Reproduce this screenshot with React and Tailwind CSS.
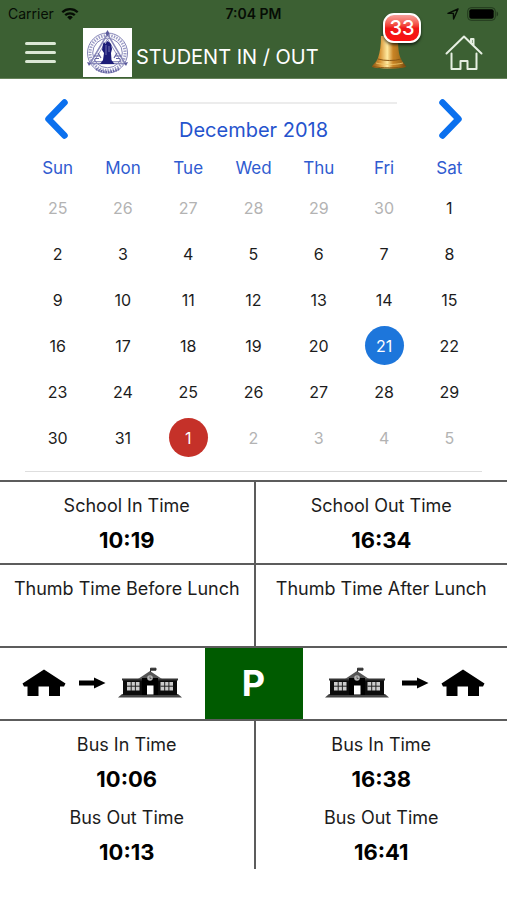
import React from "react";

const WEEKDAYS = ["Sun", "Mon", "Tue", "Wed", "Thu", "Fri", "Sat"];

const WEEKS = [
  [25, 26, 27, 28, 29, 30, 1],
  [2, 3, 4, 5, 6, 7, 8],
  [9, 10, 11, 12, 13, 14, 15],
  [16, 17, 18, 19, 20, 21, 22],
  [23, 24, 25, 26, 27, 28, 29],
  [30, 31, 1, 2, 3, 4, 5],
];

function WifiIcon() {
  return (
    <svg viewBox="0 0 18 14" className="h-[14px] w-[18px]" fill="none" stroke="#060d05" strokeWidth="2.3" aria-hidden="true">
      <path d="M1.3 5.2a11 11 0 0 1 15.4 0" />
      <path d="M4.2 8.2a7 7 0 0 1 9.6 0" />
      <path d="M9 13 6.2 10.2a4 4 0 0 1 5.6 0Z" fill="#060d05" stroke="none" />
    </svg>
  );
}

function StatusBar() {
  return (
    <div className="grid h-[27px] grid-cols-3 items-center px-2 text-[13px] leading-[18px] text-[#060d05]">
      <div className="flex items-center gap-[7px]">
        <span className="text-[14px]">Carrier</span>
        <WifiIcon />
      </div>
      <div className="text-center text-[14px] font-semibold">7:04 PM</div>
      <div className="flex items-center justify-end gap-[8px]">
        <svg viewBox="0 0 12 12" className="h-[12px] w-[12px]" fill="none" stroke="#060d05" strokeWidth="1.4" strokeLinejoin="round" aria-hidden="true">
          <path d="M11 1 1 5.400h5.400L6.600 11Z" />
        </svg>
        <svg viewBox="0 0 32 14" className="h-[14px] w-[32px]" aria-hidden="true">
          <rect x="0.7" y="0.7" width="27.6" height="12.6" rx="3.4" fill="none" stroke="#22391d" strokeWidth="1" />
          <rect x="2.3" y="2.3" width="24.4" height="9.4" rx="2" fill="#000" />
          <path d="M29.6 4.6c2 .6 2 4.2 0 4.8Z" fill="#22391d" />
        </svg>
      </div>
    </div>
  );
}

function Crest() {
  return (
    <svg viewBox="0 0 49 49" className="h-[49px] w-[49px] bg-white" role="img" aria-label="School crest">
      <g fill="none" stroke="#6464a3">
        <circle cx="24.5" cy="25" r="20" strokeWidth="0.8" />
        <circle cx="24.5" cy="25" r="17.5" strokeWidth="3" strokeDasharray="1.4 1.2" stroke="#9c9cc6" />
        <circle cx="24.5" cy="25" r="14.8" strokeWidth="0.8" />
        <path d="M24.5 6 7 35.5h35Z" strokeWidth="1.5" stroke="#8a8aba" />
        <path d="M24.5 11 11 33.5h27Z" strokeWidth="0.7" />
        <path d="M13 41q11.500 6 23 0" strokeWidth="2.500" strokeDasharray="1.500 1" />
        <path d="M11 28h6m-5 2.500h4M32 28h6m-5 2.500h4M15 25l3 5M34 25l-3 5" strokeWidth="1.200" />
      </g>
      <path d="m24.500 2 2 3.500-2 2.500-2-2.500ZM4 34l4 1-2 3ZM45 34l-4 1 2 3Z" fill="#5a5a9c" />
      <path d="M20 16l1-2 1.500 2 1.500-3 2 1 2 2 1 5-1 4 .5 7 3 4H17l3-4 1-7-2-3Z" fill="#1d1d78" />
      <path d="M23 17v10M26 18v6" stroke="#9a9ac8" strokeWidth="0.7" />
    </svg>
  );
}

function Bell() {
  return (
    <svg viewBox="0 0 36 38" className="h-[38px] w-[36px]" aria-hidden="true">
      <defs>
        <linearGradient id="brass" x1="0" x2="1">
          <stop offset="0" stopColor="#8a5512" />
          <stop offset="0.25" stopColor="#d9983a" />
          <stop offset="0.45" stopColor="#ffeaa0" />
          <stop offset="0.62" stopColor="#c98425" />
          <stop offset="0.82" stopColor="#a8701c" />
          <stop offset="1" stopColor="#70420d" />
        </linearGradient>
      </defs>
      <path d="M10 2h17c0 11 .5 18 3 23 2 4 5 6 5 8-8 2-27 2-34 0 0-2 4-4 6-9C9 18 10 11 10 2Z" fill="url(#brass)" />
      <path d="M7 25c6 2 17 2 23 0M1.500 32.500c9 1.800 25 1.800 33 0" fill="none" stroke="#8a5714" strokeWidth="1" />
      <path d="M5 29c7 2 19 2 27 0" fill="none" stroke="#f2cb70" strokeWidth="0.8" />
    </svg>
  );
}

function Header() {
  return (
    <header className="border-b border-[#66835a] bg-[#3c6033]">
      <StatusBar />
      <div className="flex h-[51px] items-center pr-6 pl-[25px]">
        <button type="button" aria-label="Menu" className="flex w-[31px] flex-col gap-[6px]">
          <span className="h-[3px] rounded-full bg-[#dbe8d5]" />
          <span className="h-[3px] rounded-full bg-[#dbe8d5]" />
          <span className="h-[3px] rounded-full bg-[#dbe8d5]" />
        </button>
        <div className="ml-[27px]">
          <Crest />
        </div>
        <h1 className="ml-1 flex-1 pt-[8px] text-[20px] leading-[26px] whitespace-nowrap text-white">STUDENT IN / OUT</h1>
        <button type="button" aria-label="Notifications, 33 unread" className="relative mr-[38px] h-[38px] w-[36px]">
          <Bell />
          <span className="absolute -top-[21px] left-[12px] flex h-[30px] w-[38px] items-center justify-center rounded-[11px] border-2 border-white bg-linear-to-b from-[#f8a09c] via-[#ef1717] to-[#fa1212] text-[20px] leading-none font-medium text-white shadow-[0_2px_3px_#000000aa]">
            33
          </span>
        </button>
        <button type="button" aria-label="Home">
          <svg viewBox="0 0 38 36" className="h-[36px] w-[38px]" fill="none" stroke="#e6efe2" strokeWidth="2" strokeLinecap="round" strokeLinejoin="round" aria-hidden="true">
            <path d="M1.500 18.500 19 1.500l17.500 17M26 8V4h2.500v6.500M6.500 18.500v15.500h9v-8h7v8h9v-15.500" />
          </svg>
        </button>
      </div>
    </header>
  );
}

function dayClass(week, day) {
  if (week === 3 && day === 21) return "bg-[#1d76db] text-white";
  if (week === 5 && day === 1) return "bg-[#c53129] text-white";
  if ((week === 0 && day > 7) || (week === 5 && day < 7)) return "text-[#b3b3b3]";
  return "text-[#1c1c1c]";
}

function Calendar() {
  return (
    <section aria-label="Calendar" className="px-[25px] pb-[8px]">
      <div className="flex h-[75px] justify-between px-[19px] pt-[20px]">
        <button type="button" aria-label="Previous month" className="h-[40px] w-[24px]">
          <svg viewBox="0 0 24 40" className="h-[40px] w-[24px]" fill="none" stroke="#0b70ee" strokeWidth="6.500" strokeLinecap="round" strokeLinejoin="round" aria-hidden="true">
            <path d="M20.500 3.500 4.500 20l16 16.500" />
          </svg>
        </button>
        <div className="mx-[42px] mt-[3px] flex-1 border-t-2 border-[#ececec]">
          <h2 className="pt-[14px] text-center text-[20px] leading-[24px] text-[#2553cd]">December 2018</h2>
        </div>
        <button type="button" aria-label="Next month" className="h-[40px] w-[24px]">
          <svg viewBox="0 0 24 40" className="h-[40px] w-[24px]" fill="none" stroke="#0b70ee" strokeWidth="6.500" strokeLinecap="round" strokeLinejoin="round" aria-hidden="true">
            <path d="m3.500 3.500 16 16.500-16 16.500" />
          </svg>
        </button>
      </div>
      <table className="w-full table-fixed border-b border-[#dedede]">
        <thead>
          <tr className="h-[28px]">
            {WEEKDAYS.map((d) => (
              <th key={d} scope="col" className="p-0 text-center text-[17px] leading-[20px] font-normal text-[#2f5bd0]">{d}</th>
            ))}
          </tr>
        </thead>
        <tbody>
          {WEEKS.map((days, week) => (
            <tr key={week} className="h-[46px] last:h-[59px]">
              {days.map((day) => (
                <td key={day} className="p-0 pt-[6px] text-center align-top">
                  <button type="button" className={`h-[39px] w-[39px] rounded-full text-[16px] leading-[20px] ${dayClass(week, day)}`}>
                    {day}
                  </button>
                </td>
              ))}
            </tr>
          ))}
        </tbody>
      </table>
    </section>
  );
}

function Entry({ label, time }) {
  return (
    <div className="text-center">
      <dt className="text-[18px] leading-[24px] text-[#1c1c1c]">{label}</dt>
      <dd className="pt-[8px] text-[22px] leading-[28px] font-bold text-black">{time}</dd>
    </div>
  );
}

function Pair({ children, className }) {
  return (
    <dl className={`grid grid-cols-2 *:pt-[12px] *:last:border-l-2 *:last:border-[#5c5c5c] ${className}`}>
      {children}
    </dl>
  );
}

function House() {
  return (
    <svg viewBox="0 0 44 28" className="h-[28px] w-[44px]" aria-hidden="true">
      <path d="M22 .5 43.500 14.500 42 17.500H38V27H27v-9.500H16.500V27H5.500v-9.500H2L.5 14.500Z" fill="#000" />
    </svg>
  );
}

function Arrow() {
  return (
    <svg viewBox="0 0 28 12" className="h-[12px] w-[28px]" aria-hidden="true">
      <path d="M1 3.500h15V.5L27.500 6 16 11.500v-3H1Z" fill="#000" />
    </svg>
  );
}

function School() {
  return (
    <svg viewBox="0 0 64 32" className="h-[32px] w-[64px]" aria-hidden="true">
      <path d="M0 30.500 4 27h56l4 3.500Z" fill="#444" />
      <path d="M5 12h54v16H5Z" fill="#0c0c0c" />
      <path d="M4 11.500h20v2H4ZM40 11.500h20v2H40Z" fill="#333" />
      <path d="M32 4 44 12H20Z" fill="#555" />
      <path d="M24 11h16v17H24Z" fill="#000" />
      <path d="M32.500 5V1.200h5.500v2h-5" fill="#333" stroke="#333" strokeWidth="1" />
      <circle cx="32" cy="11" r="2.800" fill="#b5b5b5" />
      <path d="M32 9.500v2h1.500" fill="none" stroke="#333" strokeWidth="0.7" />
      <path d="M29 18.500h6.500v9H29Z" fill="#fff" />
      <path d="M9 15h12.500v8.500H9ZM42.500 15H55v8.500H42.500Z" fill="#ccc" />
      <path d="M13.200 15v9M17.400 15v9M9 19.200h13M46.700 15v9M50.900 15v9M42.500 19.200h13" stroke="#222" strokeWidth="1" />
    </svg>
  );
}

export default function App() {
  return (
    <div className="min-h-screen bg-white font-['Inter','Liberation_Sans',sans-serif]">
      <Header />
      <main>
        <Calendar />
        <section aria-label="Attendance" className="divide-y-2 divide-[#5c5c5c] border-t-2 border-[#5c5c5c]">
          <Pair className="h-[83px]">
            <Entry label="School In Time" time="10:19" />
            <Entry label="School Out Time" time="16:34" />
          </Pair>
          <Pair className="h-[83px]">
            <Entry label="Thumb Time Before Lunch" />
            <Entry label="Thumb Time After Lunch" />
          </Pair>
          <div className="flex h-[73px]">
            <div className="flex flex-1 items-center justify-center gap-[12px]" role="img" aria-label="Home to school">
              <House />
              <Arrow />
              <School />
            </div>
            <div className="flex w-[98px] items-center justify-center bg-[#005b00] text-[36px] leading-[40px] font-bold text-white">P</div>
            <div className="flex flex-1 items-center justify-center gap-[12px]" role="img" aria-label="School to home">
              <School />
              <Arrow />
              <House />
            </div>
          </div>
          <Pair className="h-[148px]">
            <div className="flex flex-col gap-[13px]">
              <Entry label="Bus In Time" time="10:06" />
              <Entry label="Bus Out Time" time="10:13" />
            </div>
            <div className="flex flex-col gap-[13px]">
              <Entry label="Bus In Time" time="16:38" />
              <Entry label="Bus Out Time" time="16:41" />
            </div>
          </Pair>
        </section>
      </main>
    </div>
  );
}
